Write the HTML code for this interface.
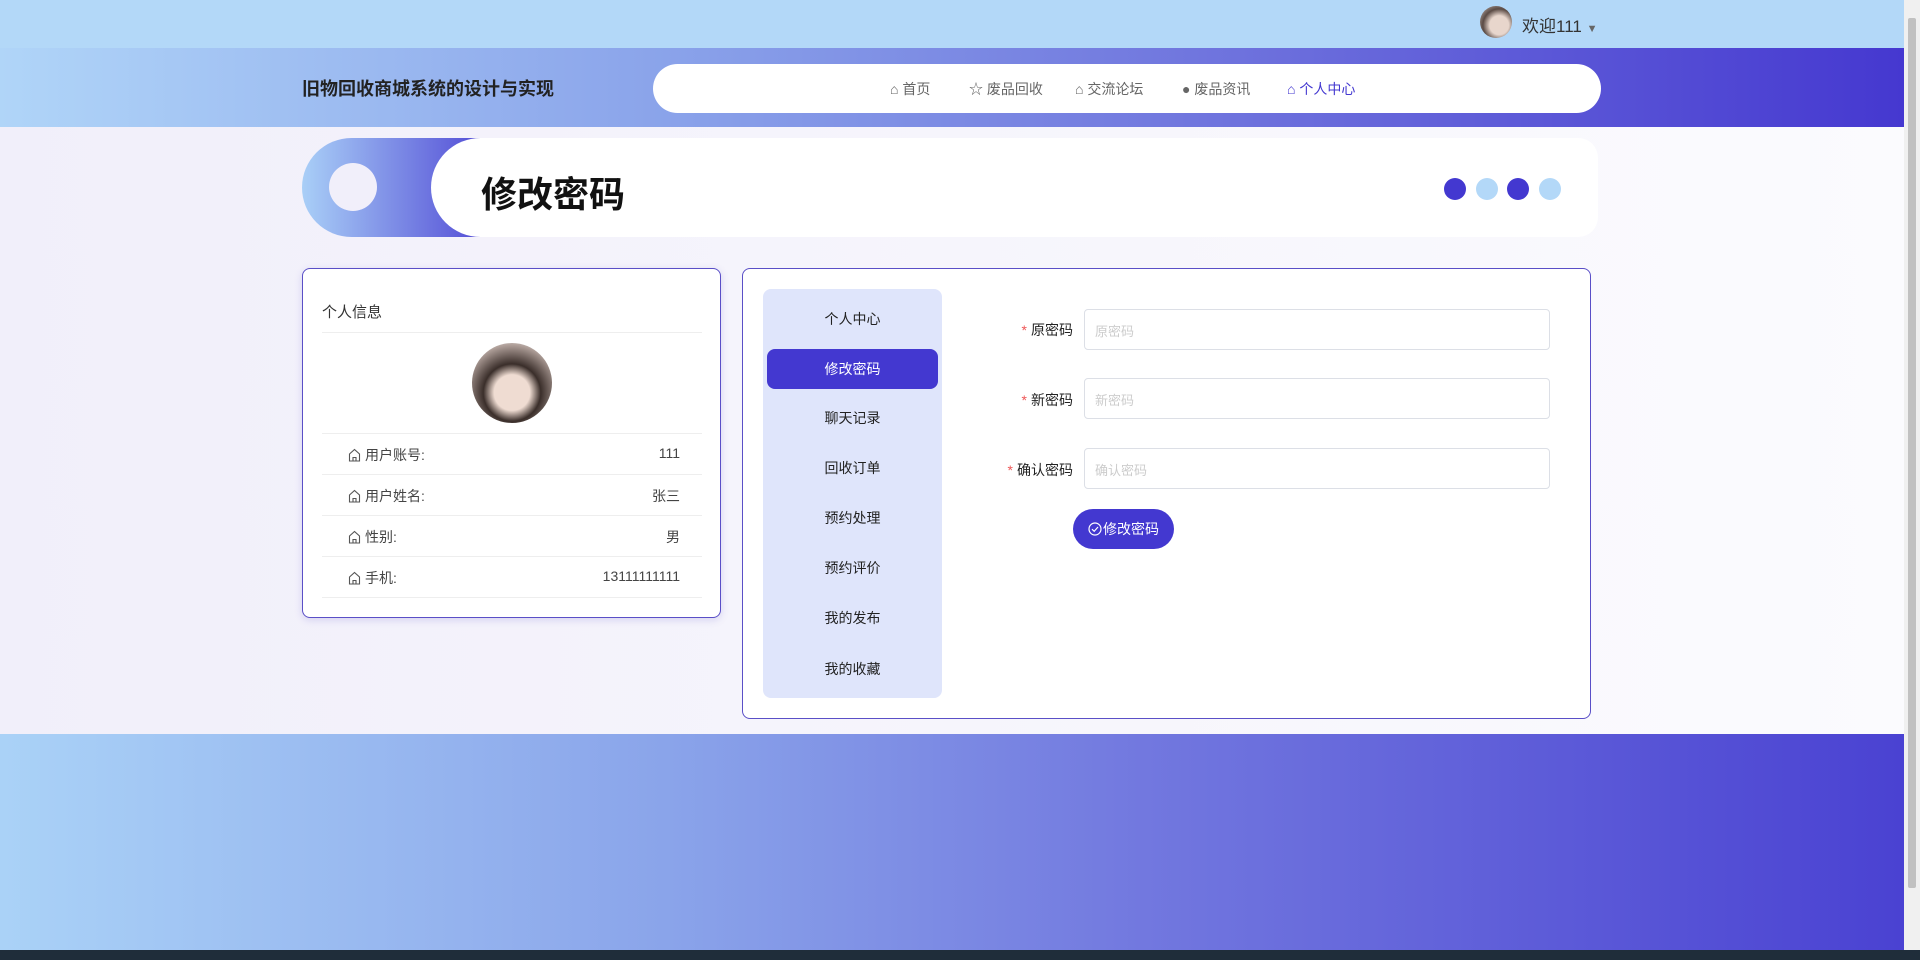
<!DOCTYPE html>
<html><head><meta charset="utf-8"><style>
*{margin:0;padding:0;box-sizing:border-box}
body{width:1920px;height:960px;overflow:hidden;position:relative;font-family:"Liberation Sans","Noto Sans CJK SC",sans-serif;background:#f3f1fb;color:#333}
.abs{position:absolute}
.top{left:0;top:0;width:1904px;height:48px;background:#b3d8f8}
.hdr{left:0;top:48px;width:1904px;height:79px;background:linear-gradient(90deg,#b0d5f8 0%,#8aa3ea 35%,#6e72dd 65%,#4538d0 100%)}
.main{left:0;top:127px;width:1904px;height:607px;background:linear-gradient(90deg,#f1effa,#fbfbfe)}
.foot{left:0;top:734px;width:1904px;height:216px;background:linear-gradient(90deg,#aad2f7 0%,#8aa4ea 35%,#7278df 60%,#4a42d2 100%)}
.task{left:0;top:950px;width:1920px;height:10px;background:#1f2d3a}
.sb{left:1904px;top:0;width:16px;height:950px;background:#f0f0f0}
.sb i{position:absolute;left:4px;top:18px;width:8px;height:870px;background:#c1c1c1;border-radius:2px}
.navp{left:653px;top:64px;width:948px;height:49px;background:#fff;border-radius:25px}
.nav{top:79px;font-size:14px;color:#666;white-space:nowrap}
.card{background:#fff;border:1px solid #5a4fc7;border-radius:8px;box-shadow:0 2px 8px rgba(90,80,200,.2)}
.row{left:322px;width:380px;height:41px;border-bottom:1px solid #eee;font-size:14px;color:#444}
.row .l{position:absolute;left:26px;top:11px}
.row .v{position:absolute;right:22px;top:11px}
.mi{left:767px;width:171px;height:40px;line-height:40px;text-align:center;font-size:14px;color:#222;border-radius:8px}
.lab{width:120px;text-align:right;font-size:14px;color:#222;left:953px}
.lab b{color:#e55;font-weight:normal;margin-right:4px}
.inp{left:1084px;width:466px;height:41px;border:1px solid #dcdfe6;border-radius:4px;background:#fff;font-size:13px;color:#ccc;padding:11px 10px}
svg.ic{display:inline-block;vertical-align:-2px;margin-right:4px}
</style></head><body>
<div class="abs top"></div>
<div class="abs" style="left:1480px;top:6px;width:32px;height:32px;border-radius:50%;background:radial-gradient(circle at 60% 60%,#e8d6cc 35%,#5a4a44 60%,#b8aaa4 90%)"></div>
<div class="abs" style="left:1522px;top:12px;font-size:17px;color:#333">欢迎111 <span style="font-size:11px;color:#666">▼</span></div>
<div class="abs hdr"></div>
<div class="abs" style="left:302px;top:75px;font-size:18px;font-weight:bold;color:#222">旧物回收商城系统的设计与实现</div>
<div class="abs navp"></div>
<div class="abs nav" style="left:890px">⌂ 首页</div>
<div class="abs nav" style="left:969px">☆ 废品回收</div>
<div class="abs nav" style="left:1075px">⌂ 交流论坛</div>
<div class="abs nav" style="left:1182px">● 废品资讯</div>
<div class="abs nav" style="left:1287px;color:#4338d0">⌂ 个人中心</div>
<div class="abs main"></div>
<div class="abs" style="left:302px;top:138px;width:200px;height:99px;border-radius:50px 0 0 50px;background:linear-gradient(90deg,#a9cff7,#4a3fd2)"></div>
<div class="abs" style="left:329px;top:163px;width:48px;height:48px;border-radius:50%;background:#f1effa"></div>
<div class="abs" style="left:431px;top:138px;width:1167px;height:99px;border-radius:50px 20px 20px 50px;background:#fff"></div>
<div class="abs" style="left:481px;top:166px;font-size:36px;font-weight:bold;color:#111">修改密码</div>
<div class="abs" style="left:1444px;top:178px;width:22px;height:22px;border-radius:50%;background:#4338d0"></div>
<div class="abs" style="left:1476px;top:178px;width:22px;height:22px;border-radius:50%;background:#b3d8f8"></div>
<div class="abs" style="left:1507px;top:178px;width:22px;height:22px;border-radius:50%;background:#4338d0"></div>
<div class="abs" style="left:1539px;top:178px;width:22px;height:22px;border-radius:50%;background:#b3d8f8"></div>

<div class="abs card" style="left:302px;top:268px;width:419px;height:350px"></div>
<div class="abs" style="left:322px;top:301px;font-size:15px;color:#333">个人信息</div>
<div class="abs" style="left:322px;top:332px;width:380px;height:1px;background:#eee"></div>
<div class="abs" style="left:472px;top:343px;width:80px;height:80px;border-radius:50%;background:radial-gradient(circle at 50% 62%,#efdcd2 28%,#3a2e2a 45%,#b0a09a 75%,#e8e4e2 90%)"></div>
<div class="abs" style="left:322px;top:433px;width:380px;height:1px;background:#eee"></div>
<div class="abs row" style="top:434px"><span class="l"><svg class="ic" width="13" height="14" viewBox="0 0 13 14"><path d="M1.5 6L6.5 1.5L11.5 6V13H1.5Z M5 13V9.5H8V13" fill="none" stroke="#555" stroke-width="1.1"/></svg>用户账号:</span><span class="v">111</span></div>
<div class="abs row" style="top:475px"><span class="l"><svg class="ic" width="13" height="14" viewBox="0 0 13 14"><path d="M1.5 6L6.5 1.5L11.5 6V13H1.5Z M5 13V9.5H8V13" fill="none" stroke="#555" stroke-width="1.1"/></svg>用户姓名:</span><span class="v">张三</span></div>
<div class="abs row" style="top:516px"><span class="l"><svg class="ic" width="13" height="14" viewBox="0 0 13 14"><path d="M1.5 6L6.5 1.5L11.5 6V13H1.5Z M5 13V9.5H8V13" fill="none" stroke="#555" stroke-width="1.1"/></svg>性别:</span><span class="v">男</span></div>
<div class="abs row" style="top:557px"><span class="l"><svg class="ic" width="13" height="14" viewBox="0 0 13 14"><path d="M1.5 6L6.5 1.5L11.5 6V13H1.5Z M5 13V9.5H8V13" fill="none" stroke="#555" stroke-width="1.1"/></svg>手机:</span><span class="v">13111111111</span></div>

<div class="abs card" style="left:742px;top:268px;width:849px;height:451px;box-shadow:none"></div>
<div class="abs" style="left:763px;top:289px;width:179px;height:409px;background:#dfe5fb;border-radius:8px"></div>
<div class="abs mi" style="top:299px">个人中心</div>
<div class="abs mi" style="top:349px;background:#4338d0;color:#fff">修改密码</div>
<div class="abs mi" style="top:398px">聊天记录</div>
<div class="abs mi" style="top:448px">回收订单</div>
<div class="abs mi" style="top:498px">预约处理</div>
<div class="abs mi" style="top:548px">预约评价</div>
<div class="abs mi" style="top:598px">我的发布</div>
<div class="abs mi" style="top:649px">我的收藏</div>

<div class="abs lab" style="top:320px"><b>*</b>原密码</div>
<div class="abs inp" style="top:309px">原密码</div>
<div class="abs lab" style="top:390px"><b>*</b>新密码</div>
<div class="abs inp" style="top:378px">新密码</div>
<div class="abs lab" style="top:460px"><b>*</b>确认密码</div>
<div class="abs inp" style="top:448px">确认密码</div>
<div class="abs" style="left:1073px;top:509px;width:101px;height:40px;border-radius:20px;background:#4338d0;color:#fff;font-size:14px;line-height:40px;text-align:center"><svg width="14" height="14" viewBox="0 0 14 14" style="vertical-align:-2px;margin-right:1px"><circle cx="7" cy="7" r="6" fill="none" stroke="#fff" stroke-width="1.2"/><path d="M4 7.2L6.2 9.3L10 5" fill="none" stroke="#fff" stroke-width="1.2"/></svg>修改密码</div>

<div class="abs foot"></div>
<div class="abs task"></div>
<div class="abs sb"><i></i></div>
</body></html>
